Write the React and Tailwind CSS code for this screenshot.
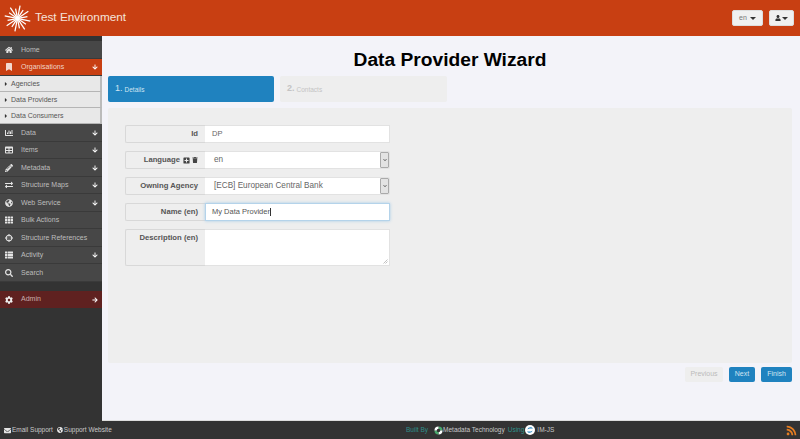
import React from "react";
import {
  FaHome,
  FaBookmark,
  FaChartBar,
  FaTable,
  FaPencilAlt,
  FaExchangeAlt,
  FaGlobeAmericas,
  FaTh,
  FaCrosshairs,
  FaThList,
  FaSearch,
  FaCog,
  FaArrowDown,
  FaArrowRight,
  FaUser,
  FaEnvelope,
  FaRss,
  FaPlusSquare,
  FaTrash,
  FaCaretRight,
  FaChevronDown,
} from "react-icons/fa";

const MENU_TOP = [
  { label: "Home", icon: FaHome },
  { label: "Organisations", icon: FaBookmark, arrow: true, active: true },
];

const SUB_ITEMS = ["Agencies", "Data Providers", "Data Consumers"];

const MENU_BOTTOM = [
  { label: "Data", icon: FaChartBar, arrow: true },
  { label: "Items", icon: FaTable, arrow: true },
  { label: "Metadata", icon: FaPencilAlt, arrow: true },
  { label: "Structure Maps", icon: FaExchangeAlt, arrow: true },
  { label: "Web Service", icon: FaGlobeAmericas, arrow: true },
  { label: "Bulk Actions", icon: FaTh },
  { label: "Structure References", icon: FaCrosshairs },
  { label: "Activity", icon: FaThList, arrow: true },
  { label: "Search", icon: FaSearch },
];

const MenuItem = ({ item }) => {
  const Icon = item.icon;
  return (
    <div
      className={`flex items-center h-[17.5px] pt-[1px] pl-[4px] pr-[4px] border-b border-[#3a3a3a] text-[7px] ${
        item.active ? "bg-[#c83f12] text-[#f0d5c8]" : "bg-[#474747] text-[#bdbdbd]"
      }`}
    >
      <span className="w-[9px] flex justify-center shrink-0">
        <Icon size={8} className={item.active ? "text-[#f3d9cf]" : "text-[#e4e4e4]"} />
      </span>
      <span className="ml-[8px] flex-1">{item.label}</span>
      {item.arrow && <FaArrowDown size={6} className="text-white" />}
    </div>
  );
};

const Label = ({ children, tall }) => (
  <div
    className={`w-[80px] shrink-0 bg-[#eeeeee] border border-[#d8d8d8] border-r-0 rounded-l-[2px] flex justify-end pr-[7px] gap-[2px] text-[7.7px] font-bold text-[#555] ${
      tall ? "pt-[2px]" : "items-center"
    }`}
  >
    {children}
  </div>
);

const SelectBox = ({ value }) => (
  <div className="flex-1 bg-white border border-[#e2e2e2] border-l-0 flex items-center pl-[9px] text-[8.2px] text-[#666] rounded-r-[2px]">
    <span className="flex-1">{value}</span>
    <div className="w-[9px] h-full bg-[#e3e3e3] border border-[#aaa] rounded-[1px] flex items-center justify-center">
      <FaChevronDown size={4} className="text-[#555]" />
    </div>
  </div>
);

const App = () => {
  return (
    <div className="w-[800px] h-[439px] overflow-hidden flex flex-col bg-[#333333] font-['Liberation_Sans',Arial,sans-serif]">
      <header className="h-[36px] shrink-0 bg-[#c83f12] flex items-center pl-[4px] pr-[6px]">
        <svg width="27" height="27" viewBox="-14 -14 28 28" className="shrink-0">
          {Array.from({ length: 16 }).map((_, i) => {
            const a = (i * Math.PI) / 8 + 0.2;
            const r = i % 2 ? 10.5 : 13.5;
            return (
              <line
                key={i}
                x1={Math.cos(a) * 2}
                y1={Math.sin(a) * 2}
                x2={Math.cos(a) * r}
                y2={Math.sin(a) * r}
                stroke="#fff"
                strokeWidth="1.3"
              />
            );
          })}
          <circle r="2.5" fill="#fff" />
        </svg>
        <span className="ml-[4px] text-[11.8px] text-[#f5e3da] flex-1">Test Environment</span>
        <div className="flex gap-[6px]">
          <div className="w-[31px] h-[16px] bg-[#f0f0f0] border border-[#ddd] rounded-[2px] flex items-center justify-between px-[6px] text-[7px] text-[#777]">
            <span>en</span>
            <span className="w-0 h-0 border-x-[3px] border-x-transparent border-t-[3px] border-t-[#333]" />
          </div>
          <div className="w-[25px] h-[16px] bg-[#f0f0f0] border border-[#ddd] rounded-[2px] flex items-center justify-between px-[5px]">
            <FaUser size={6} className="text-[#333]" />
            <span className="w-0 h-0 border-x-[3px] border-x-transparent border-t-[3px] border-t-[#333]" />
          </div>
        </div>
      </header>

      <div className="flex-1 flex min-h-0">
        <aside className="w-[102px] shrink-0 pt-[5px] flex flex-col">
          {MENU_TOP.map((item) => (
            <MenuItem key={item.label} item={item} />
          ))}
          {SUB_ITEMS.map((label) => (
            <div
              key={label}
              className="h-[16px] pt-[1px] bg-[#e8e8e8] border-b border-[#b5b5b5] border-r-2 border-r-[#bbb] flex items-center pl-[3px] text-[7px] text-[#555]"
            >
              <FaCaretRight size={6} className="text-[#333]" />
              <span className="ml-[2px]">{label}</span>
            </div>
          ))}
          {MENU_BOTTOM.map((item) => (
            <MenuItem key={item.label} item={item} />
          ))}
          <div className="mt-[9px] h-[17px] pt-[1px] bg-[#5f2120] flex items-center px-[4px] text-[7px] text-[#c9b0ae]">
            <span className="w-[9px] flex justify-center shrink-0">
              <FaCog size={8} className="text-[#eee]" />
            </span>
            <span className="ml-[8px] flex-1">Admin</span>
            <FaArrowRight size={6} className="text-white" />
          </div>
        </aside>

        <main className="flex-1 bg-[#f3f3f9] flex flex-col pl-[6px] pr-[8px] border-b border-[#ddd]">
          <h1 className="h-[40px] shrink-0 pb-[2px] flex items-end justify-center text-[19.2px] leading-[28px] font-bold text-black">
            Data Provider Wizard
          </h1>
          <div className="flex gap-[6px]">
            <div className="w-[166px] h-[26px] bg-[#1f82bf] rounded-[2px] flex items-center pl-[7px] text-[#cfe4f2]">
              <span className="text-[9px]">1.</span>
              <span className="ml-[2px] text-[6.5px] pt-[1px]">Details</span>
            </div>
            <div className="w-[167px] h-[26px] bg-[#eeeeee] rounded-[2px] flex items-center pl-[7px] text-[#c4c4c4]">
              <span className="text-[9px] font-bold">2.</span>
              <span className="ml-[2px] text-[6.5px] pt-[1px]">Contacts</span>
            </div>
          </div>

          <section className="mt-[6px] h-[255px] bg-[#eeeeee] rounded-[2px] pt-[17px] pl-[17px]">
            <div className="w-[265px] flex flex-col gap-[8px]">
              <div className="flex h-[18px]">
                <Label>Id</Label>
                <div className="flex-1 bg-white border border-[#e2e2e2] border-l-0 flex items-center pl-[7px] text-[7.5px] text-[#666]">
                  DP
                </div>
              </div>
              <div className="flex h-[18px]">
                <Label>
                  Language
                  <FaPlusSquare size={7} className="ml-[1px] self-center text-[#444]" />
                  <FaTrash size={6} className="self-center text-[#444]" />
                </Label>
                <SelectBox value="en" />
              </div>
              <div className="flex h-[18px]">
                <Label>Owning Agency</Label>
                <SelectBox value="[ECB] European Central Bank" />
              </div>
              <div className="flex h-[18px]">
                <Label>Name (en)</Label>
                <div className="flex-1 bg-white border border-[#b4d3ea] shadow-[0_0_3px_#a8cde8] flex items-center pl-[6px] text-[7.5px] text-[#555]">
                  My Data Provider
                  <span className="w-px h-[8px] bg-[#333]" />
                </div>
              </div>
              <div className="flex h-[37px]">
                <Label tall>Description (en)</Label>
                <div className="flex-1 bg-white border border-[#e2e2e2] border-l-0 relative">
                  <svg width="5" height="5" viewBox="0 0 5 5" className="absolute right-[1px] bottom-[1px]">
                    <path d="M0.5 4.5 L4.5 0.5 M2.5 4.5 L4.5 2.5" stroke="#999" strokeWidth="0.6" />
                  </svg>
                </div>
              </div>
            </div>
          </section>

          <div className="mt-[4px] flex justify-end gap-[6px] text-[7px]">
            <div className="w-[38px] h-[15px] bg-[#eeeeee] rounded-[2px] flex items-center justify-center text-[#bbb]">
              Previous
            </div>
            <div className="w-[26px] h-[15px] bg-[#1f82bf] rounded-[2px] flex items-center justify-center text-[#cfe4f2]">
              Next
            </div>
            <div className="w-[31px] h-[15px] bg-[#1f82bf] rounded-[2px] flex items-center justify-center text-[#cfe4f2]">
              Finish
            </div>
          </div>
        </main>
      </div>

      <footer className="h-[18px] shrink-0 bg-[#333333] flex items-center pl-[4px] pr-[3px] text-[6.5px] text-[#c8c8c8]">
        <div className="w-[300px] flex items-center">
          <FaEnvelope size={7} className="text-[#e4e4e4]" />
          <span className="ml-[1px]">Email Support</span>
          <FaGlobeAmericas size={6} className="ml-[4px] text-[#eee]" />
          <span className="ml-[1px]">Support Website</span>
        </div>
        <div className="ml-[102px] flex items-center">
          <span className="text-[#2f8f8a]">Built By</span>
          <svg width="9" height="9" viewBox="0 0 10 10" className="ml-[6px]">
            <path d="M5 0.5a4.5 4.5 0 0 1 4.5 4.5H7A2 2 0 0 0 5 3z" fill="#4aa96c" />
            <path d="M9.5 5A4.5 4.5 0 0 1 5 9.5V7a2 2 0 0 0 2-2z" fill="#fff" />
            <path d="M5 9.5A4.5 4.5 0 0 1 .5 5H3a2 2 0 0 0 2 2z" fill="#4aa96c" />
            <path d="M.5 5A4.5 4.5 0 0 1 5 .5V3a2 2 0 0 0-2 2z" fill="#fff" />
          </svg>
          <span>Metadata Technology</span>
          <span className="ml-[3px] text-[#2f8f8a]">Using</span>
          <svg width="10" height="10" viewBox="0 0 10 10" className="ml-[1px]">
            <circle cx="5" cy="5" r="5" fill="#fff" />
            <path d="M2 6.5C3.5 8.5 7 8 7.5 5.5 6 7 4 6.5 2 6.5zM8 3.5C6.5 1.5 3 2 2.5 4.5 4 3 6 3.5 8 3.5z" fill="#1f82bf" />
          </svg>
          <span className="ml-[2px]">IM-JS</span>
        </div>
        <FaRss size={11} className="ml-auto text-[#e67e22]" />
      </footer>
    </div>
  );
};

export default App;
